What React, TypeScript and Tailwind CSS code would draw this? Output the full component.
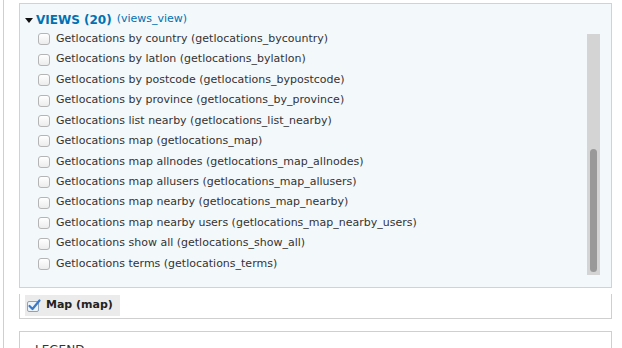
import React from 'react';

const views = [
  'Getlocations by country (getlocations_bycountry)',
  'Getlocations by latlon (getlocations_bylatlon)',
  'Getlocations by postcode (getlocations_bypostcode)',
  'Getlocations by province (getlocations_by_province)',
  'Getlocations list nearby (getlocations_list_nearby)',
  'Getlocations map (getlocations_map)',
  'Getlocations map allnodes (getlocations_map_allnodes)',
  'Getlocations map allusers (getlocations_map_allusers)',
  'Getlocations map nearby (getlocations_map_nearby)',
  'Getlocations map nearby users (getlocations_map_nearby_users)',
  'Getlocations show all (getlocations_show_all)',
  'Getlocations terms (getlocations_terms)',
];

const Checkbox = () => (
  <span className="inline-block h-[12px] w-[12px] shrink-0 rounded-[3px] border border-[#b5b5b5] bg-gradient-to-b from-white to-[#ececec]" />
);

const CheckedIcon = () => (
  <svg width="15" height="13" viewBox="0 0 15 13" className="shrink-0">
    <rect x="1.5" y="2.5" width="11" height="10" rx="1.5" fill="#eef3f8" stroke="#8ea3b8" />
    <path d="M3.5 7 L6.5 10 L13.5 1.5" fill="none" stroke="#3a78c9" strokeWidth="2.2" strokeLinecap="round" strokeLinejoin="round" />
  </svg>
);

export default function App() {
  return (
    <div className="h-[348px] w-[622px] overflow-hidden bg-white font-['DejaVu_Sans',sans-serif] text-[#333]">
      <div className="ml-[3px] h-full border-l border-[#cfcfcf] pl-[15px] pr-[10px] pt-[3px]">
        {/* views fieldset */}
        <div className="h-[285px] border border-[#cdd3d6] bg-[#f3f8fb] pl-[5px] pr-[11px]">
          <div className="flex h-[25px] items-center pt-[6px]">
            <svg width="8" height="5" viewBox="0 0 8 5" className="mr-[3px] mt-[1px]">
              <path d="M0 0 L8 0 L4 5 Z" fill="#111" />
            </svg>
            <span className="text-[12px] font-bold text-[#0071b3]">VIEWS (20)</span>
            <span className="ml-[5px] text-[11px] text-[#0071b3]">(views_view)</span>
          </div>
          <div className="flex">
            <div className="flex-1 pl-[13px]">
              {views.map((v) => (
                <div key={v} className="flex h-[20.45px] items-center gap-[6px] text-[11px]">
                  <Checkbox />
                  <span>{v}</span>
                </div>
              ))}
            </div>
            <div className="mt-[5px] h-[241px] w-[13px] bg-[#d4d4d4] px-[3px] pt-[115px]">
              <div className="h-[123px] w-[7px] rounded-full bg-[#999]" />
            </div>
          </div>
        </div>

        {/* map fieldset */}
        <div className="mt-[6px] h-[25px] border-x border-b border-[#cfcfcf] pl-[5px] pt-[1px]">
          <div className="flex h-[21px] w-[95px] items-center gap-[5px] bg-[#ebebeb] pl-[1px]">
            <CheckedIcon />
            <span className="text-[11px] font-bold text-[#222]">Map (map)</span>
          </div>
        </div>

        {/* legend fieldset */}
        <div className="mt-[12px] h-[40px] border-x border-t border-[#cfcfcf] pl-[15px] pt-[5px]">
          <span className="text-[12px] text-[#333]">LEGEND</span>
        </div>
      </div>
    </div>
  );
}
